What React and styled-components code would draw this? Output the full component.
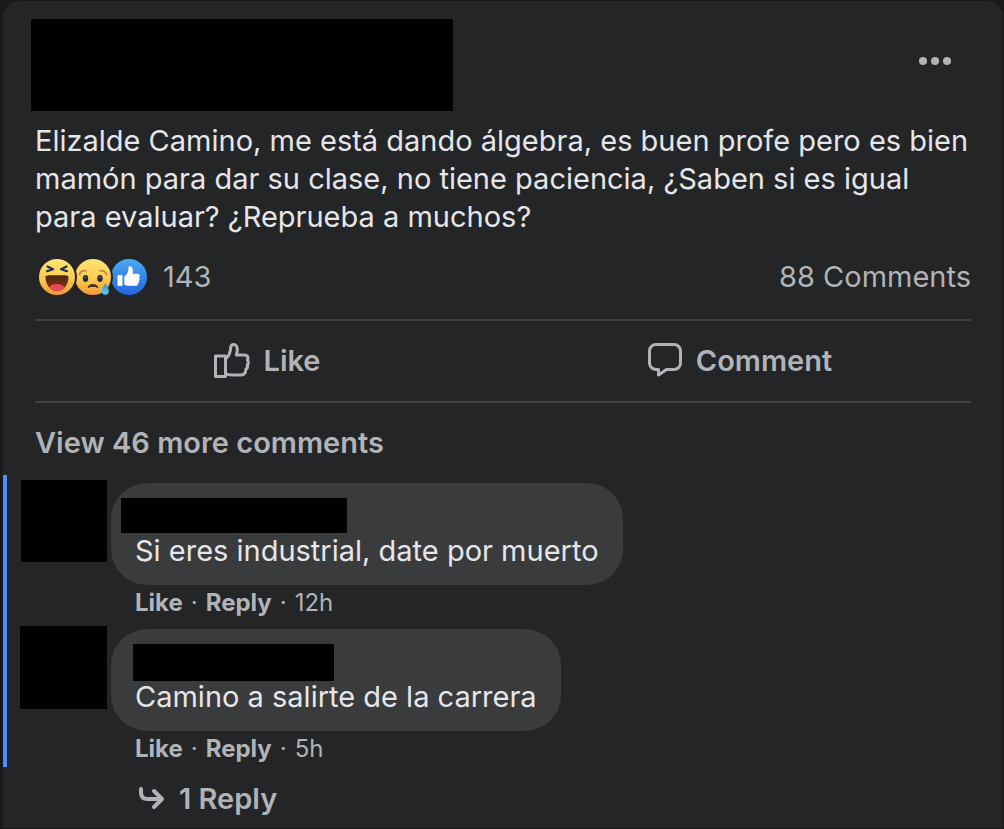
import React from 'react';
import styled, { createGlobalStyle } from 'styled-components';

const commentsData = [
  {
    id: 1,
    text: 'Si eres industrial, date por muerto',
    time: '12h',
    avatar: { width: 86, height: 82 },
    name: { width: 226, height: 35, shift: -14 },
    replies: 0,
  },
  {
    id: 2,
    text: 'Camino a salirte de la carrera',
    time: '5h',
    avatar: { width: 87, height: 83 },
    name: { width: 201, height: 37, shift: -2 },
    replies: 1,
  },
];

const HahaIcon = () => (
  <svg width="36" height="36" viewBox="0 0 36 36" aria-hidden="true">
    <defs>
      <linearGradient id="hahaFace" x1="0" y1="0" x2="0" y2="1">
        <stop offset="0" stopColor="#ffe674" />
        <stop offset="0.55" stopColor="#fccb50" />
        <stop offset="1" stopColor="#f09a35" />
      </linearGradient>
      <linearGradient id="hahaMouth" x1="0" y1="0" x2="0" y2="1">
        <stop offset="0" stopColor="#472315" />
        <stop offset="1" stopColor="#8b3a0e" />
      </linearGradient>
      <clipPath id="hahaClip">
        <path d="M6.500 17.800c0-1.800 5-1.600 11.500-1.600s11.500-.2 11.500 1.600C29.500 26 24.500 32 18 32S6.500 26 6.500 17.800z" />
      </clipPath>
    </defs>
    <circle cx="18" cy="18" r="18" fill="url(#hahaFace)" />
    <g clipPath="url(#hahaClip)">
      <rect x="6" y="14" width="24" height="20" fill="url(#hahaMouth)" />
      <ellipse cx="18" cy="29.500" rx="8" ry="4.500" fill="#e8475a" />
    </g>
    <g
      fill="none"
      stroke="#24304f"
      strokeWidth="2.200"
      strokeLinecap="round"
      strokeLinejoin="round"
    >
      <path d="M8.500 7.500l5.500 2.700-6 2" />
      <path d="M27.500 7.500l-5.500 2.700 6 2" />
    </g>
  </svg>
);

const SadIcon = () => (
  <svg width="36" height="36" viewBox="0 0 36 36" aria-hidden="true">
    <defs>
      <linearGradient id="sadFace" x1="0" y1="0" x2="0" y2="1">
        <stop offset="0" stopColor="#ffe674" />
        <stop offset="0.55" stopColor="#fccb50" />
        <stop offset="1" stopColor="#f09a35" />
      </linearGradient>
      <linearGradient id="sadTear" x1="0" y1="0" x2="0" y2="1">
        <stop offset="0" stopColor="#2d93d8" />
        <stop offset="1" stopColor="#62cbf8" />
      </linearGradient>
    </defs>
    <circle cx="18" cy="18" r="18" fill="url(#sadFace)" />
    <g fill="none" stroke="#d0853c" strokeWidth="1.800" strokeLinecap="round">
      <path d="M4.500 15.500c1-2.800 3.500-4.300 6.500-3.700" />
      <path d="M31.500 15.500c-1-2.800-3.500-4.300-6.500-3.700" />
    </g>
    <ellipse cx="10.500" cy="19.500" rx="2.700" ry="3.400" fill="#202a49" />
    <ellipse cx="25" cy="19.500" rx="2.700" ry="3.400" fill="#202a49" />
    <circle cx="10" cy="18" r="1" fill="#4e5f8c" />
    <circle cx="24.500" cy="18" r="1" fill="#4e5f8c" />
    <path
      d="M13 28.500c.8-4 9-4 10 0-3-1.600-7-1.600-10 0z"
      fill="#4e2a17"
      stroke="#4e2a17"
      strokeWidth="1"
      strokeLinejoin="round"
    />
    <path
      d="M30.500 24c1.300 3 3.300 5 3.300 8a3.500 3.800 0 0 1-7 0c0-3 2.200-5 3.700-8z"
      fill="url(#sadTear)"
    />
  </svg>
);

const LikeBadge = () => (
  <svg width="36" height="36" viewBox="0 0 36 36" aria-hidden="true">
    <defs>
      <linearGradient id="likeFill" x1="0" y1="0" x2="0" y2="1">
        <stop offset="0" stopColor="#4aaaf5" />
        <stop offset="1" stopColor="#2465dc" />
      </linearGradient>
    </defs>
    <circle cx="18" cy="18" r="18" fill="url(#likeFill)" />
    <rect x="6.500" y="16" width="5" height="11" rx="1.200" fill="#fff" />
    <path
      d="M13.300 17.500c2.300-1.500 3.700-3.700 4-6.300.1-1.400-.2-3.400 1.300-3.900 1.500-.4 3 1.200 3.300 3.400.2 1.600-.1 2.900-.5 4.100h4.900c2.800 0 3.200 2.700 1.700 3.700 1 1 .9 2.500-.2 3.200.5 1.200.1 2.200-.9 2.700.2 1.600-.8 2.400-2.900 2.400h-5.500c-2.300 0-3.700-.3-5.200-1.300z"
      fill="#fff"
    />
  </svg>
);

const ThumbIcon = () => (
  <svg width="38" height="38" viewBox="0 1 38 38" aria-hidden="true">
    <g fill="none" stroke="#b0b3b8" strokeWidth="3" strokeLinejoin="round">
      <path d="M2.500 15h10v20.500h-10z" />
      <path d="M12.500 18c2.300-1.700 4-4.500 4.800-8.500.5-2.500-.2-5.700 2.700-6 3.200-.3 4.500 2.500 4.300 5.500-.1 2-.5 3.500-1 5h8c3.800 0 4.400 3.200 3 5 1.500 1.600 1.400 3.800-.1 5 .8 1.900-.1 3.500-1.400 4.300.3 3-1.500 5.700-4.700 5.700H19c-2.600 0-4.600-.3-6.500-1.500" />
    </g>
  </svg>
);

const BubbleIcon = () => (
  <svg width="36" height="36" viewBox="0 0 36 36" aria-hidden="true">
    <path
      d="M9 1.500h18a6.500 6.500 0 0 1 6.500 6.500v12a6.500 6.500 0 0 1-6.500 6.500h-7.500L11.500 32v-5.500H9A6.500 6.500 0 0 1 2.500 20V8A6.500 6.500 0 0 1 9 1.500z"
      fill="none"
      stroke="#b0b3b8"
      strokeWidth="3"
      strokeLinejoin="round"
    />
  </svg>
);

const ReplyArrow = () => (
  <svg width="28" height="28" viewBox="0 0 28 28" aria-hidden="true">
    <path
      d="M4 4v3.500C4 12 6 14 10.500 14H25M17 6l8 8-8 8"
      fill="none"
      stroke="#b0b3b8"
      strokeWidth="4"
      strokeLinecap="round"
      strokeLinejoin="round"
    />
  </svg>
);

function Comment({ text, time, avatar, name, replies }) {
  return (
    <>
      <CommentRow>
        <AvatarBox>
          <Redacted $width={avatar.width} $height={avatar.height} />
        </AvatarBox>
        <div>
          <Bubble>
            <NameRow $shift={name.shift}>
              <Redacted $width={name.width} $height={name.height} />
            </NameRow>
            <CommentText>{text}</CommentText>
          </Bubble>
          <Meta>
            <MetaButton>Like</MetaButton>
            <span>·</span>
            <MetaButton>Reply</MetaButton>
            <span>·</span>
            <time>{time}</time>
          </Meta>
        </div>
      </CommentRow>
      {replies > 0 ? (
        <RepliesButton>
          <ReplyArrow />
          {replies} Reply
        </RepliesButton>
      ) : null}
    </>
  );
}

function App() {
  return (
    <>
      <GlobalStyle />
      <Card>
        <Header>
          <Redacted $width={422} $height={92} />
          <MoreButton aria-label="More options">
            <Dot />
            <Dot />
            <Dot />
          </MoreButton>
        </Header>
        <PostText>
          Elizalde Camino, me está dando álgebra, es buen profe pero es bien
          mamón para dar su clase, no tiene paciencia, ¿Saben si es igual para
          evaluar? ¿Reprueba a muchos?
        </PostText>
        <Stats>
          <Reactions>
            <Reaction $order={3}>
              <HahaIcon />
            </Reaction>
            <Reaction $order={2}>
              <SadIcon />
            </Reaction>
            <Reaction $order={1}>
              <LikeBadge />
            </Reaction>
            <Count>143</Count>
          </Reactions>
          <span>88 Comments</span>
        </Stats>
        <Actions>
          <ActionButton>
            <ThumbIcon />
            Like
          </ActionButton>
          <ActionButton>
            <BubbleIcon />
            Comment
          </ActionButton>
        </Actions>
        <ViewMore>View 46 more comments</ViewMore>
        <Comments>
          {commentsData.map((elem) => (
            <Comment key={elem.id} {...elem} />
          ))}
        </Comments>
      </Card>
    </>
  );
}

export default App;

const GlobalStyle = createGlobalStyle`
  * {
    box-sizing: border-box;
  }

  body {
    margin: 0;
    background: #18191a;
    color: #e4e6eb;
    font-family: Inter, 'Liberation Sans', sans-serif;
    font-size: 29px;
    line-height: 38px;
  }

  svg {
    display: block;
    flex-shrink: 0;
  }
`;

const TextButton = styled.button`
  display: flex;
  align-items: center;
  padding: 0;
  border: none;
  background: transparent;
  color: #b0b3b8;
  font: inherit;
  font-weight: 600;
  cursor: pointer;
`;

const Card = styled.article`
  margin: 1px 1px 0 3px;
  padding-top: 18px;
  padding-bottom: 10px;
  background: #242526;
  border-radius: 16px 16px 0 0;
`;

const Redacted = styled.div`
  width: ${({ $width }) => $width}px;
  height: ${({ $height }) => $height}px;
  flex-shrink: 0;
  background: #000;
`;

const Header = styled.header`
  display: flex;
  justify-content: space-between;
  padding: 0 52px 0 28px;
`;

const MoreButton = styled(TextButton)`
  gap: 4px;
  height: 84px;
`;

const Dot = styled.span`
  width: 8px;
  height: 8px;
  border-radius: 50%;
  background: #b0b3b8;
`;

const PostText = styled.p`
  margin: 11px 32px 0;
`;

const Stats = styled.div`
  display: flex;
  justify-content: space-between;
  align-items: center;
  margin: 22px 32px 0;
  padding-bottom: 23px;
  color: #b0b3b8;
`;

const Reactions = styled.div`
  display: flex;
  align-items: center;
  padding-left: 4px;
`;

const Reaction = styled.span`
  position: relative;
  z-index: ${({ $order }) => $order};
  border-radius: 50%;
  box-shadow: 0 0 0 2px #242526;
`;

const Count = styled.span`
  margin-left: 16px;
`;

const Actions = styled.div`
  display: grid;
  grid-template-columns: 1fr 1fr;
  gap: 10px;
  margin: 0 32px;
  border-top: 2px solid #3e4042;
  border-bottom: 2px solid #3e4042;
`;

const ActionButton = styled(TextButton)`
  justify-content: center;
  gap: 13px;
  height: 80px;
`;

const ViewMore = styled(TextButton)`
  margin: 21px 32px 0;
`;

const Comments = styled.section`
  padding-top: 13px;
`;

const CommentRow = styled.div`
  display: flex;
  align-items: flex-start;
  min-height: 146px;
  border-left: 4px solid #4a90ff;
`;

const AvatarBox = styled.div`
  display: flex;
  justify-content: flex-end;
  width: 104px;
  margin-top: 5px;
  padding-right: 4px;
`;

const Bubble = styled.div`
  width: fit-content;
  margin-top: 8px;
  padding: 15px 24px;
  background: #3a3b3c;
  border-radius: 36px;
`;

const NameRow = styled.div`
  height: 34px;
  margin-left: ${({ $shift }) => $shift}px;
`;

const CommentText = styled.p`
  position: relative;
  margin: 0;
`;

const Meta = styled.div`
  display: flex;
  align-items: center;
  gap: 8px;
  height: 36px;
  padding-left: 24px;
  color: #b0b3b8;
  font-size: 24px;
`;

const MetaButton = styled(TextButton)`
  font-weight: 700;
`;

const RepliesButton = styled(TextButton)`
  gap: 14px;
  margin: 13px 0 0 134px;
`;
